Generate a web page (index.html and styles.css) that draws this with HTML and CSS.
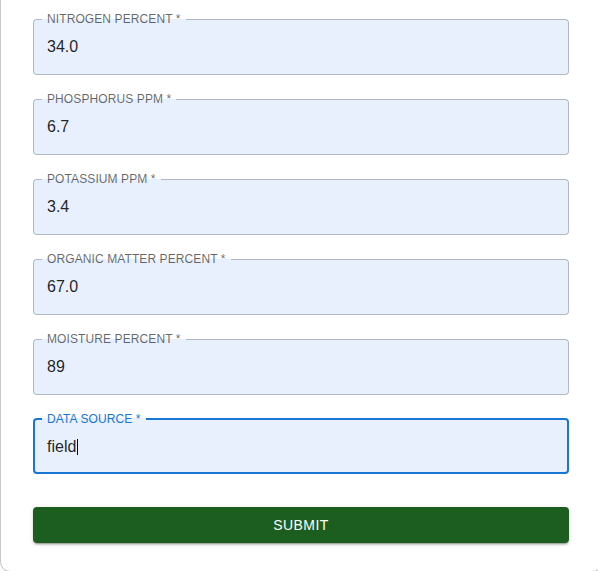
FILE: index.html
```html
<!DOCTYPE html>
<html lang="en">
<head>
<meta charset="utf-8">
<title>Soil sample</title>
<link rel="stylesheet" href="styles.css">
</head>
<body>
<div class="card">
  <form class="form">
    <fieldset class="field">
      <legend class="label">NITROGEN PERCENT *</legend>
      <div class="value">34.0</div>
    </fieldset>
    <fieldset class="field">
      <legend class="label">PHOSPHORUS PPM *</legend>
      <div class="value">6.7</div>
    </fieldset>
    <fieldset class="field">
      <legend class="label">POTASSIUM PPM *</legend>
      <div class="value">3.4</div>
    </fieldset>
    <fieldset class="field">
      <legend class="label">ORGANIC MATTER PERCENT *</legend>
      <div class="value">67.0</div>
    </fieldset>
    <fieldset class="field">
      <legend class="label">MOISTURE PERCENT *</legend>
      <div class="value">89</div>
    </fieldset>
    <fieldset class="field field--focused">
      <legend class="label">DATA SOURCE *</legend>
      <div class="value">field<span class="caret"></span></div>
    </fieldset>
    <button type="button" class="submit">SUBMIT</button>
  </form>
</div>
</body>
</html>
```

FILE: styles.css
```css
html, body {
  margin: 0;
  padding: 0;
  overflow: hidden;
  background: #ffffff;
}

body {
  font-family: "Liberation Sans", Arial, sans-serif;
  width: 598px;
  height: 571px;
}

.card {
  width: 602px;
  box-sizing: border-box;
  border: 1px solid #c9c9c9;
  border-top: none;
  border-radius: 0 0 10px 10px;
  padding: 13px 32px 28px;
  background: #fff;
}

.form {
  display: flex;
  flex-direction: column;
  gap: 18px;
  margin: 0;
}

.field {
  margin: 0;
  min-width: 0;
  border: 1px solid rgba(0, 0, 0, 0.23);
  border-radius: 4px;
  background: #e8f0fe;
  padding: 0 8px 16px;
}

.label {
  padding: 0 5px;
  font-size: 12px;
  line-height: 13px;
  color: rgba(0, 0, 0, 0.6);
  letter-spacing: 0.1px;
}

.value {
  margin-top: 9px;
  padding: 0 5px;
  height: 23px;
  font-size: 16px;
  line-height: 23px;
  color: rgba(0, 0, 0, 0.87);
  display: flex;
  align-items: center;
}

.field--focused {
  border: 2px solid #1976d2;
  padding: 0 7px 14px;
}

.field--focused .label {
  color: #1976d2;
  line-height: 12px;
}

.field--focused .value {
  margin-top: 10px;
}

.caret {
  display: inline-block;
  width: 1px;
  height: 16px;
  background: #000;
  margin-left: 1px;
}

.submit {
  margin-top: 15px;
  height: 36px;
  border: none;
  border-radius: 4px;
  background: #1b5e20;
  color: #fff;
  font-family: "Liberation Sans", Arial, sans-serif;
  font-size: 14px;
  font-weight: 400;
  letter-spacing: 0.4px;
  box-shadow: 0 3px 1px -2px rgba(0,0,0,0.2), 0 2px 2px 0 rgba(0,0,0,0.14), 0 1px 5px 0 rgba(0,0,0,0.12);
  cursor: pointer;
}
```
